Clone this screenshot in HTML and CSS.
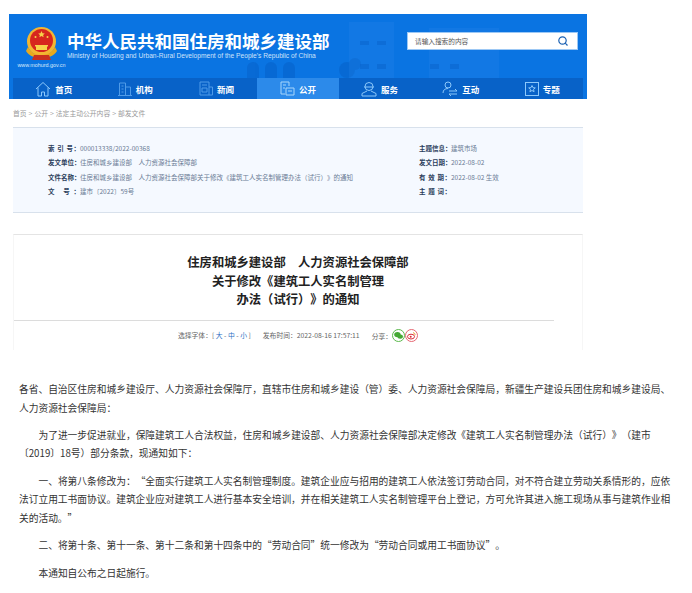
FILE: index.html
```html
<!DOCTYPE html>
<html lang="zh-CN">
<head>
<meta charset="UTF-8" />
<title>住房和城乡建设部 人力资源社会保障部关于修改《建筑工人实名制管理办法（试行）》的通知</title>
<link rel="stylesheet" href="styles.css">
</head>
<body>
  <header class="banner">
    <svg class="scenery" width="578" height="64" viewBox="0 0 578 64">
      <g fill="#0660c8" opacity=".5">
        <path d="M238 64V54a6 6 0 0 1 12 0v10zM256 64V54a6 6 0 0 1 12 0v10zM274 64V54a6 6 0 0 1 12 0v10z"/>
        <circle cx="338" cy="56" r="8"/>
        <circle cx="346" cy="50" r="6"/>
      </g>
      <g fill="#2a86ea" opacity=".25">
        <rect x="340" y="8" width="45" height="56"/>
        <rect x="420" y="14" width="70" height="50"/>
      </g>
      <g fill="#0a63cc" opacity=".5">
        <rect x="351" y="50" width="9" height="5"/><rect x="368" y="50" width="9" height="5"/>
        <rect x="421" y="50" width="9" height="5"/><rect x="441" y="50" width="9" height="5"/>
        <rect x="351" y="27" width="9" height="4"/><rect x="368" y="27" width="9" height="4"/>
      </g>
    </svg>
    <div class="banner-top">
      <div class="logo">
        <svg class="emblem" width="31" height="34" viewBox="0 0 31 34">
          <circle cx="15.500" cy="14.500" r="14.500" fill="#f2b632"/>
          <circle cx="15.500" cy="13.500" r="11.500" fill="#d7261e"/>
          <path d="M15.500 4l1 2.200 2.300.2-1.700 1.500.5 2.300-2.100-1.200-2.100 1.200.5-2.300-1.700-1.500 2.300-.2z" fill="#f7d24a"/>
          <circle cx="9.500" cy="10" r="1" fill="#f7d24a"/>
          <circle cx="21.500" cy="10" r="1" fill="#f7d24a"/>
          <path d="M9 18h13v1.500h-1V23H10v-3.500H9z" fill="#f7d24a"/>
          <path d="M2 20c3 6 8 8 13.500 8S26 26 29 20l2 4c-3 5-9 7-15.500 7S3 29 0 24z" fill="#e8a91d"/>
          <path d="M8 28h15l2 5H6z" fill="#c9301f"/>
        </svg>
        <span class="site-url">www.mohurd.gov.cn</span>
      </div>
      <div class="site-name">
        <div class="name-zh">中华人民共和国住房和城乡建设部</div>
        <div class="name-en">Ministry of Housing and Urban-Rural Development of the People's Republic of China</div>
      </div>
      <div class="search">
        <span>请输入搜索的内容</span>
        <svg width="10" height="10" viewBox="0 0 10 10" fill="none" stroke="#1c62b3" stroke-width="1.200">
          <circle cx="4.500" cy="4.500" r="3.700"/>
          <path d="M7.200 7.200l2.300 2.300"/>
        </svg>
      </div>
    </div>
    <nav class="nav">
      <a class="nav-item">
        <svg width="16" height="16" viewBox="0 0 16 16" fill="none" stroke="#8cc8fb"><path d="M1 8l7-6.500L15 8M3 6.500V15h3.500v-4h3v4H13V6.500"/></svg>
        首页
      </a>
      <a class="nav-item">
        <svg width="14" height="14" viewBox="0 0 14 14" fill="none" stroke="#4f9be8"><path d="M1.500 13V1h6v12M7.500 5h5v8M0 13.500h14M3.500 4h2M3.500 7h2M3.500 10h2"/></svg>
        机构
      </a>
      <a class="nav-item">
        <svg width="14" height="15" viewBox="0 0 14 15" fill="none" stroke="#4f9be8"><path d="M1 1h9v13H1zM10 6h3.500v8H10M3 4h5M3 7h5v4H3z"/></svg>
        新闻
      </a>
      <a class="nav-item active">
        <svg width="15" height="15" viewBox="0 0 15 15" fill="none" stroke="#a8d6fb"><path d="M9 5V1H1v12h4M3 4h3M3 7h2M6 7h8v7H6zM8 10h4"/></svg>
        公开
      </a>
      <a class="nav-item">
        <svg width="16" height="16" viewBox="0 0 16 16" fill="none" stroke="#8cc8fb"><circle cx="8" cy="5.500" r="4"/><path d="M3 6h10M6 10l-5 2.500V15h14v-2.500L10 10"/></svg>
        服务
      </a>
      <a class="nav-item">
        <svg width="16" height="16" viewBox="0 0 16 16" fill="none" stroke="#8cc8fb"><circle cx="6" cy="4" r="3"/><path d="M1 12c0-3 2-4.500 5-4.500M7 10h8l-2-2M15 13H7l2 2"/></svg>
        互动
      </a>
      <a class="nav-item">
        <svg width="14" height="14" viewBox="0 0 14 14" fill="none" stroke="#8cc8fb"><rect x=".5" y=".5" width="13" height="13"/><path d="M7 3.500l1 2.200 2.300.2-1.800 1.500.6 2.300-2.100-1.200-2.100 1.200.6-2.300-1.800-1.500 2.300-.2z"/></svg>
        专题
      </a>
    </nav>
  </header>

  <div class="crumbs">首页 &gt; 公开 &gt; 法定主动公开内容 &gt; 部发文件</div>

  <section class="meta">
    <div class="meta-col">
      <div class="meta-row"><b>索 引 号：</b>000013338/2022-00368</div>
      <div class="meta-row"><b>发文单位：</b>住房和城乡建设部　人力资源社会保障部</div>
      <div class="meta-row"><b>文件名称：</b>住房和城乡建设部　人力资源社会保障部关于修改《建筑工人实名制管理办法（试行）》的通知</div>
      <div class="meta-row"><b>文 号：</b>建市〔2022〕59号</div>
    </div>
    <div class="meta-side">
      <div class="meta-row"><b>主题信息：</b>建筑市场</div>
      <div class="meta-row"><b>发文日期：</b>2022-08-02</div>
      <div class="meta-row"><b>有 效 期：</b>2022-08-02 生效</div>
      <div class="meta-row"><b>主 题 词：</b></div>
    </div>
  </section>

  <section class="head">
    <h1>住房和城乡建设部　人力资源社会保障部<br>关于修改《建筑工人实名制管理<br>办法（试行）》的通知</h1>
    <div class="rule"></div>
    <div class="head-info">
      <span>选择字体：[ <i>大</i> - <i>中</i> - <i>小</i> ]</span>
      <span>发布时间：2022-08-16 17:57:11</span>
      <span class="share">分享：
        <svg width="13" height="13" viewBox="0 0 13 13"><circle cx="6.500" cy="6.500" r="6" fill="#fff" stroke="#5bb84c"/><ellipse cx="5.400" cy="5.600" rx="3.200" ry="2.600" fill="#45a935"/><ellipse cx="8.200" cy="7.600" rx="2.700" ry="2.200" fill="#45a935"/></svg>
        <svg width="13" height="13" viewBox="0 0 13 13"><circle cx="6.500" cy="6.500" r="6" fill="#fff" stroke="#e56570"/><ellipse cx="6" cy="7.600" rx="3.500" ry="2.400" fill="none" stroke="#d92f3a"/><circle cx="5.700" cy="7.800" r="1" fill="#d92f3a"/><path d="M8 3.800c1.500 0 2.200 1 2 2.400" fill="none" stroke="#e8a030"/></svg>
      </span>
    </div>
  </section>

  <article class="content">
    <p class="first">各省、自治区住房和城乡建设厅、人力资源社会保障厅，直辖市住房和城乡建设（管）委、人力资源社会保障局，新疆生产建设兵团住房和城乡建设局、人力资源社会保障局：</p>
    <p>为了进一步促进就业，保障建筑工人合法权益，住房和城乡建设部、人力资源社会保障部决定修改《建筑工人实名制管理办法（试行）》（建市〔2019〕18号）部分条款，现通知如下：</p>
    <p>一、将第八条修改为：“全面实行建筑工人实名制管理制度。建筑企业应与招用的建筑工人依法签订劳动合同，对不符合建立劳动关系情形的，应依法订立用工书面协议。建筑企业应对建筑工人进行基本安全培训，并在相关建筑工人实名制管理平台上登记，方可允许其进入施工现场从事与建筑作业相关的活动。”</p>
    <p>二、将第十条、第十一条、第十二条和第十四条中的“劳动合同”统一修改为“劳动合同或用工书面协议”。</p>
    <p>本通知自公布之日起施行。</p>
  </article>
</body>
</html>
```

FILE: styles.css
```css
body{
  margin: 0;
  background: #fff;
  font-family: "Noto Sans CJK SC", "Liberation Sans", sans-serif;
  text-spacing-trim: space-all;
  overflow: hidden;
}

.banner{
  position: relative;
  margin: 14px 105px 0 9px;
  height: 85px;
  background: #0a74e2;
}

.scenery{
  position: absolute;
  left: 0;
  top: 0;
}

.banner-top{
  position: relative;
  height: 64px;
  display: flex;
  align-items: flex-start;
}

.logo{
  width: 58px;
  flex: none;
  padding: 13px 0 0 7px;
  box-sizing: border-box;
  display: flex;
  flex-direction: column;
  align-items: center;
}

.site-url{
  font-family: "Liberation Sans", sans-serif;
  font-size: 5.400px;
  line-height: 6px;
  color: #d8e8fa;
  white-space: nowrap;
  margin-top: 1px;
}

.site-name{
  padding-top: 16px;
  color: #fff;
}

.name-zh{
  font-size: 17.500px;
  line-height: 22px;
  font-weight: bold;
  white-space: nowrap;
}

.name-en{
  font-family: "Liberation Sans", sans-serif;
  font-size: 6.670px;
  line-height: 8px;
  color: #cfe3fa;
  white-space: nowrap;
}

.search{
  margin: 18px 9px 0 auto;
  flex: none;
  width: 171px;
  height: 18px;
  box-sizing: border-box;
  padding: 0 9px 0 7px;
  display: flex;
  align-items: center;
  justify-content: space-between;
  background: #fff;
  border: 1px solid #9cc8f5;
  font-size: 6.670px;
  color: #555;
}

.nav{
  position: relative;
  margin: 0 4px;
  height: 21px;
  display: grid;
  grid-template-columns: repeat(7, 1fr);
  background: #0862c8;
}

.nav-item{
  display: flex;
  align-items: center;
  justify-content: center;
  gap: 4px;
  color: #fff;
  font-size: 8.500px;
  font-weight: bold;
}

.active{
  background: #2c8aea;
}

.crumbs{
  margin: 8px 0 0 13px;
  height: 12px;
  line-height: 12px;
  font-size: 6.800px;
  word-spacing: .5px;
  color: #999;
}

.meta{
  margin: 8px 109px 0 13px;
  height: 86px;
  box-sizing: border-box;
  padding: 13px 0 0 35px;
  display: flex;
  background: #f5f9ff;
  border-top: 1px solid #d8e1ec;
  border-bottom: 1px solid #d8e1ec;
}

.meta-col{
  width: 371px;
  flex: none;
}

.meta-side{
  flex: 1;
  min-width: 0;
}

.meta-row{
  height: 14.300px;
  line-height: 14.300px;
  font-size: 6.500px;
  color: #6a7b95;
  white-space: nowrap;
}

.meta-row b{
  display: inline-block;
  width: 32px;
  text-align-last: justify;
  color: #2c3e5c;
}

.head{
  margin: 21px 109px 0 13px;
  height: 116px;
  box-sizing: border-box;
  padding-top: 18px;
  border-top: 1px solid #e4e4e4;
  border-right: 1px solid #f6f6f6;
  border-left: 1px solid #f6f6f6;
}

h1{
  margin: 0;
  height: 67px;
  text-align: center;
  font-size: 12.300px;
  line-height: 18.700px;
  font-weight: bold;
  color: #222;
}

.rule{
  margin-right: 28px;
  height: 1px;
  background: #dcdcdc;
}

.head-info{
  display: flex;
  justify-content: center;
  gap: 12px;
  padding-top: 8px;
  font-size: 6.800px;
  line-height: 12px;
  color: #666;
}

.head-info i{
  font-style: normal;
  color: #2c6fc4;
}

.share{
  display: flex;
  align-items: center;
}

.content{
  margin: 30px 0 0 19px;
  width: 654px;
  font-size: 9.730px;
  line-height: 18.600px;
  color: #333;
}

.content p{
  margin: 0 0 8.700px;
  text-indent: 2em;
}

.content p.first{
  text-indent: 0;
}
```
